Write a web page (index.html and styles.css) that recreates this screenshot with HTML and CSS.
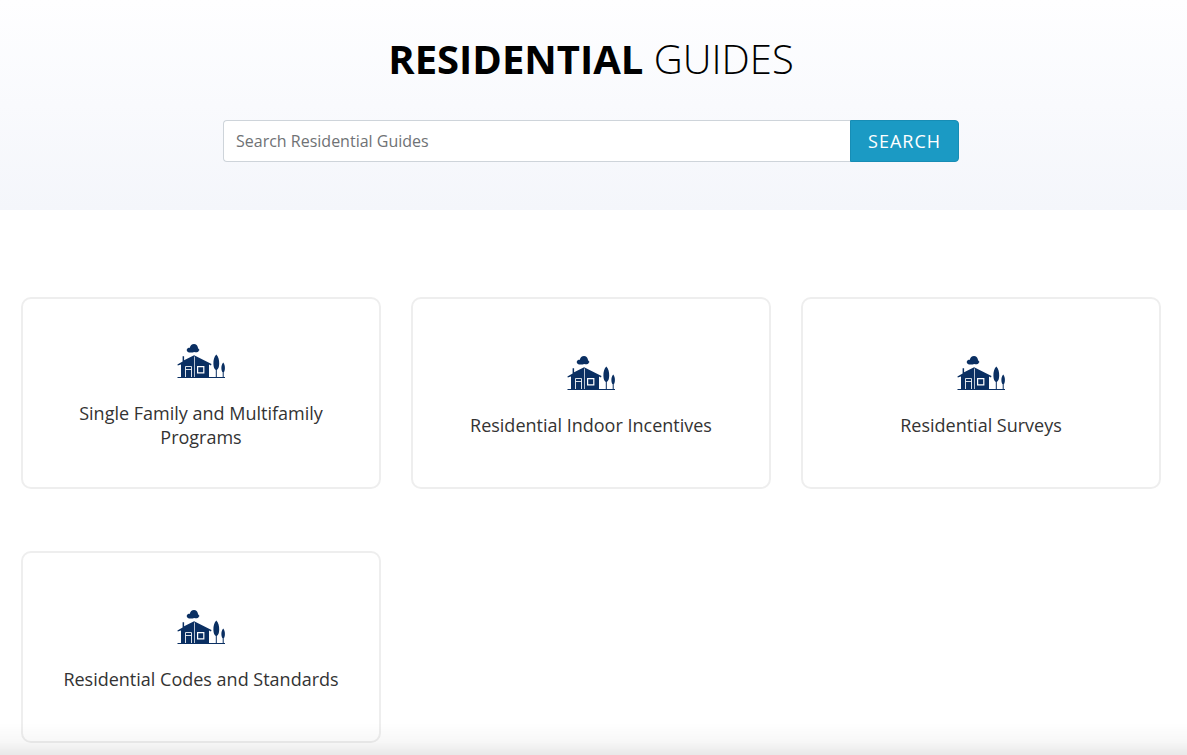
FILE: index.html
```html
<!DOCTYPE html>
<html lang="en">
  <head>
    <meta charset="UTF-8">
    <meta name="viewport" content="width=device-width, initial-scale=1">
    <title>Residential Guides</title>
    <link rel="stylesheet" href="styles.css">
  </head>
  <body>
    <!-- Shared house icon -->
    <svg class="sprite" aria-hidden="true">
      <symbol id="house" viewBox="0 0 48 48">
        <!-- Cloud -->
        <path d="M12 16.4C10.3 16.2 9.5 15 9.8 13.6C10.1 12.2 11.5 11.7 12.9 11.8C13.1 9.5 14.8 8 17 8C19.2 8 20.5 9.3 20.8 11.3C21 12.6 21.7 13.2 22.5 13.9C21.7 14.3 21.6 15.6 20.6 16C19.4 16.5 18.1 16.1 17.2 16C15.6 16.6 13.8 16.8 12 16.4Z"/>
        <!-- House and chimney -->
        <path d="M5.6 20.2H7.1V24.2L17.1 19.2L34.5 28.1L34 29.4L32 28.6V41H4V28.6L.8 29.6L.4 28.5L5.6 25.4Z"/>
        <!-- Corner, door and window -->
        <g fill="none" stroke="#fff">
          <path stroke-width="1" opacity=".7" d="M17.5 20.5V41"/>
          <path stroke-width="1" opacity=".85" d="M8.5 41V30.5H14.5V41M8.5 33.5H14.5"/>
          <path stroke-width="1.2" d="M20.6 30.7H26.8V36.8H20.6Z"/>
        </g>
        <!-- Trees and ground -->
        <path d="M39.3 18.5C41.4 20.4 42.3 24 42.2 27.8C42.1 31 41.4 33 39.8 34V41H38.8V34C37.2 33 36.5 31 36.4 27.8C36.3 24 37.2 20.4 39.3 18.5Z"/>
        <path d="M46.2 26.5C47.5 28.2 48 30.2 47.9 32.5C47.8 34.5 47.5 35.6 46.7 36.2V41H45.7V36.2C44.9 35.6 44.5 34.5 44.4 32.5C44.3 30.2 44.9 28.2 46.2 26.5Z"/>
        <path d="M.5 41H48V42H.5Z"/>
      </symbol>
    </svg>

    <header class="hero">
      <h1><strong>Residential</strong> Guides</h1>
      <form class="search" role="search">
        <input type="search" aria-label="Search Residential Guides" placeholder="Search Residential Guides">
        <button type="submit">Search</button>
      </form>
    </header>

    <main class="guides">
      <a class="card" href="#">
        <svg class="icon" aria-hidden="true"><use href="#house"/></svg>
        <span>Single Family and Multifamily Programs</span>
      </a>
      <a class="card" href="#">
        <svg class="icon" aria-hidden="true"><use href="#house"/></svg>
        <span>Residential Indoor Incentives</span>
      </a>
      <a class="card" href="#">
        <svg class="icon" aria-hidden="true"><use href="#house"/></svg>
        <span>Residential Surveys</span>
      </a>
      <a class="card" href="#">
        <svg class="icon" aria-hidden="true"><use href="#house"/></svg>
        <span>Residential Codes and Standards</span>
      </a>
    </main>

    <div class="bottom-shade"></div>
  </body>
</html>
```
FILE: styles.css
```css
* {
  box-sizing: border-box;
}

body {
  margin: 0;
  background: #fff;
  color: #333;
  font-family: "Open Sans", "Noto Sans", sans-serif;
  font-size: 18px;
  line-height: 24px;
}

.sprite {
  display: none;
}

/* Title and search */
.hero {
  padding: 32px 26px 48px 21px;
  background: linear-gradient(#fefeff, #f4f6fb);
}

.hero h1 {
  margin: 0 0 34px;
  color: #000;
  font-size: 40px;
  font-weight: 300;
  line-height: 54px;
  text-align: center;
  text-transform: uppercase;
}

.hero strong {
  font-weight: 700;
}

.search {
  display: flex;
  max-width: 736px;
  height: 42px;
  margin: 0 auto;
}

.search input {
  flex: 1;
  min-width: 0;
  padding: 0 12px;
  border: 1px solid #ced4da;
  border-right: 0;
  border-radius: 4px 0 0 4px;
  background: #fff;
  color: #333;
  font: inherit;
  font-size: 16px;
  appearance: none;
}

.search input::placeholder {
  color: #6f7275;
}

.search button {
  padding: 0 17px;
  border: 1px solid #178db5;
  border-radius: 0 4px 4px 0;
  background: #1b9ac4;
  color: #fff;
  font: inherit;
  letter-spacing: 1px;
  text-transform: uppercase;
  cursor: pointer;
}

/* Guide cards */
.guides {
  display: grid;
  grid-template-columns: repeat(auto-fill, minmax(300px, 1fr));
  gap: 62px 30px;
  padding: 87px 26px 12px 21px;
}

.card {
  display: flex;
  flex-direction: column;
  align-items: center;
  justify-content: center;
  gap: 17px;
  min-height: 192px;
  padding: 24px 40px 25px;
  border: 2px solid #eee;
  border-radius: 10px;
  color: inherit;
  text-align: center;
  text-decoration: none;
}

.icon {
  width: 48px;
  height: 48px;
  fill: #0a2f62;
}

/* Shade along the bottom edge of the window */
.bottom-shade {
  position: fixed;
  right: 0;
  bottom: 0;
  left: 0;
  height: 32px;
  background: linear-gradient(rgba(0, 0, 0, 0), rgba(0, 0, 0, 0.03) 60%, rgba(0, 0, 0, 0.09));
  pointer-events: none;
}
```
